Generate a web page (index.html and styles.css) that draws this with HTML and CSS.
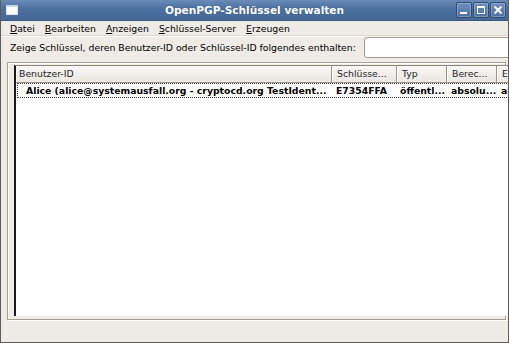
FILE: index.html
```html
<!DOCTYPE html>
<html lang="de">
<head>
    <meta charset="UTF-8">
    <title>OpenPGP-Schlüssel verwalten</title>
    <link rel="stylesheet" href="styles.css">
</head>
<body>
    <div class="window">
        <div class="titlebar">
            <div class="win-icon"></div>
            <div class="title">OpenPGP-Schlüssel verwalten</div>
            <div class="win-buttons">
                <div class="win-btn">
                    <svg width="14" height="14" viewBox="0 0 14 14"><rect x="3" y="9" width="7" height="2" fill="#fff"/></svg>
                </div>
                <div class="win-btn">
                    <svg width="14" height="14" viewBox="0 0 14 14"><rect x="3.5" y="3.5" width="7" height="7" fill="none" stroke="#fff" stroke-width="1"/><rect x="3" y="3" width="8" height="2" fill="#fff"/></svg>
                </div>
                <div class="win-btn">
                    <svg width="14" height="14" viewBox="0 0 14 14"><path d="M3.5 3.5 L10.5 10.5 M10.5 3.5 L3.5 10.5" stroke="#fff" stroke-width="2"/></svg>
                </div>
            </div>
        </div>

        <div class="menubar">
            <span class="menu-item"><u>D</u>atei</span>
            <span class="menu-item"><u>B</u>earbeiten</span>
            <span class="menu-item"><u>A</u>nzeigen</span>
            <span class="menu-item"><u>S</u>chlüssel-Server</span>
            <span class="menu-item"><u>E</u>rzeugen</span>
        </div>

        <div class="search-row">
            <label for="filter">Zeige Schlüssel, deren Benutzer-ID oder Schlüssel-ID folgendes enthalten:</label>
            <input type="text" id="filter">
        </div>

        <div class="list-frame">
            <div class="tree">
                <div class="tree-head">
                    <div class="col col-uid">Benutzer-ID</div>
                    <div class="col col-key">Schlüsse...</div>
                    <div class="col col-type">Typ</div>
                    <div class="col col-trust">Berec...</div>
                    <div class="col col-last">E</div>
                </div>
                <div class="tree-row">
                    <div class="cell cell-uid">Alice (alice@systemausfall.org - cryptocd.org TestIdent...</div>
                    <div class="cell cell-key">E7354FFA</div>
                    <div class="cell cell-type">öffentl...</div>
                    <div class="cell cell-trust">absolu...</div>
                    <div class="cell cell-last">al</div>
                </div>
            </div>
        </div>
        <div class="statusbar"></div>
    </div>
</body>
</html>
```

FILE: styles.css
```css
html, body {
    margin: 0;
    padding: 0;
}
body {
    font-family: "DejaVu Sans", sans-serif;
    font-size: 9.3px;
    color: #000;
    background-color: #efebe7;
}
.window {
    width: 509px;
    height: 343px;
    box-sizing: border-box;
    border: 1px solid #5c5c5c;
    border-top: none;
    display: flex;
    flex-direction: column;
    overflow: hidden;
}
.titlebar {
    height: 21px;
    flex: none;
    margin: 0 -1px;
    background: linear-gradient(#6b8cb8, #4d71a1 40%, #456894);
    border-bottom: 1px solid #3d5b82;
    box-sizing: border-box;
    display: flex;
    align-items: center;
    position: relative;
}
.win-icon {
    width: 10px;
    height: 7px;
    margin-left: 6px;
    background: #fff;
    border: 1px solid #dfe6ef;
    border-top: 2px solid #c9d5e4;
}
.title {
    position: absolute;
    left: 0;
    right: 0;
    text-align: center;
    color: #fff;
    font-weight: bold;
    font-size: 10.6px;
    text-shadow: 0 0 1px #2e4a6e;
}
.win-buttons {
    margin-left: auto;
    margin-right: 3px;
    display: flex;
    gap: 1px;
}
.win-btn {
    width: 14px;
    height: 14px;
    border: 1px solid #2f4d74;
    border-radius: 2px;
    background: linear-gradient(#6f8fbb, #4d70a0);
    box-shadow: inset 0 0 0 1px rgba(255, 255, 255, 0.25);
}
.win-btn svg {
    display: block;
}
.menubar {
    height: 14px;
    flex: none;
    display: flex;
    align-items: center;
    gap: 10px;
    padding: 0 9px;
    border-bottom: 1px solid #dcd6cf;
    box-shadow: 0 1px 0 #fbfaf9;
}
.menu-item u {
    text-decoration: underline;
    text-underline-offset: 1px;
}
.search-row {
    height: 22px;
    flex: none;
    display: flex;
    align-items: center;
    padding-left: 9px;
}
.search-row label {
    flex: none;
}
.search-row input {
    margin-left: 8px;
    width: 160px;
    height: 21px;
    flex: none;
    box-sizing: border-box;
    border: 1px solid #a59c91;
    border-radius: 3px;
    background: #fff;
    padding: 0 4px;
    font: inherit;
}
.list-frame {
    margin: 4px 2px 0 6px;
    height: 258px;
    flex: none;
    box-sizing: border-box;
    border: 1px solid #a89f95;
    box-shadow: inset 1px 1px 0 #fff, 1px 1px 0 #fff;
    padding: 2px 0 3px 6px;
    display: flex;
}
.tree {
    flex: 1;
    background: #fff;
    border-left: 2px solid #1a1a1a;
    border-top: 1px solid #8a847d;
    margin-right: -4px;
}
.tree-head,
.tree-row {
    display: grid;
    grid-template-columns: 316px 65px 50px 50px 1fr;
}
.tree-head {
    height: 16px;
    background: linear-gradient(#f8f7f5, #ebe7e2);
    border-bottom: 1px solid #9d958c;
}
.col {
    padding-left: 5px;
    line-height: 16px;
    border-right: 1px solid #9d958c;
    box-shadow: inset 1px 0 0 #fff;
    color: #1e1e1e;
    white-space: nowrap;
    overflow: hidden;
}
.col-uid {
    padding-left: 3px;
}
.tree-row {
    height: 13px;
    margin: 0 0 0 1px;
    border: 1px dotted #3c3c3c;
    border-right: none;
    font-weight: bold;
    line-height: 13px;
}
.cell {
    white-space: nowrap;
    overflow: hidden;
}
.cell-uid {
    padding-left: 8px;
}
.cell-key {
    padding-left: 2px;
}
.cell-type {
    padding-left: 1px;
}
.cell-trust {
    padding-left: 2px;
}
.cell-last {
    padding-left: 2px;
}
.statusbar {
    flex: 1;
}
```
